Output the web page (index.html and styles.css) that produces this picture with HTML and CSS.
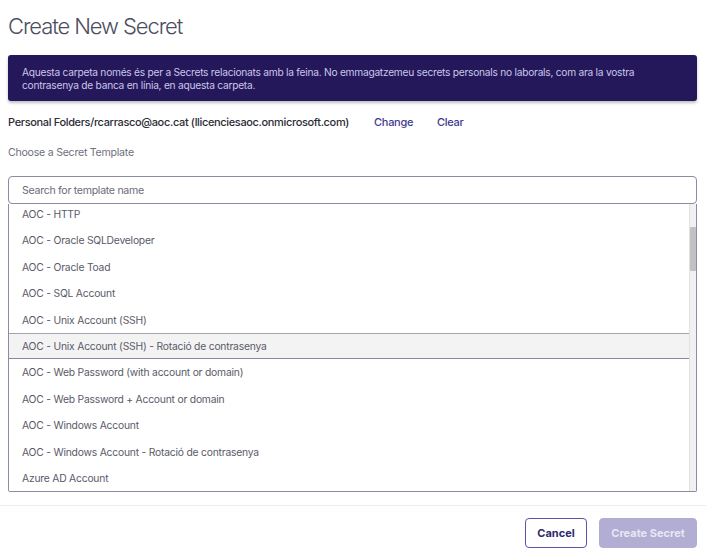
FILE: index.html
```html
<!DOCTYPE html>
<html lang="ca">
<head>
<meta charset="utf-8">
<title>Create New Secret</title>
<link rel="stylesheet" href="styles.css">
</head>
<body>
<div class="page">
  <h1 class="title">Create New Secret</h1>
  <div class="banner">Aquesta carpeta només és per a Secrets relacionats amb la feina. No emmagatzemeu secrets personals no laborals, com ara la vostra contrasenya de banca en línia, en aquesta carpeta.</div>
  <div class="folder-row">
    <span class="folder-path">Personal Folders/rcarrasco@aoc.cat (llicenciesaoc.onmicrosoft.com)</span>
    <a class="link link-change">Change</a>
    <a class="link">Clear</a>
  </div>
  <div class="label">Choose a Secret Template</div>
  <div class="picker">
    <input class="search" type="text" placeholder="Search for template name">
    <div class="list">
      <div class="items">
        <div class="items-inner">
          <div class="item">AOC - HTTP</div>
          <div class="item">AOC - Oracle SQLDeveloper</div>
          <div class="item">AOC - Oracle Toad</div>
          <div class="item">AOC - SQL Account</div>
          <div class="item">AOC - Unix Account (SSH)</div>
          <div class="item item-active">AOC - Unix Account (SSH) - Rotació de contrasenya</div>
          <div class="item">AOC - Web Password (with account or domain)</div>
          <div class="item">AOC - Web Password + Account or domain</div>
          <div class="item">AOC - Windows Account</div>
          <div class="item">AOC - Windows Account - Rotació de contrasenya</div>
          <div class="item">Azure AD Account</div>
        </div>
      </div>
      <div class="scrollbar"><div class="thumb"></div></div>
    </div>
  </div>
</div>
<div class="footer">
  <button class="btn btn-cancel">Cancel</button>
  <button class="btn btn-create" disabled>Create Secret</button>
</div>
</body>
</html>
```
FILE: styles.css
```css
* { box-sizing: border-box; }
html, body { margin: 0; padding: 0; background: #fff; }
body {
  font-family: Inter, "Noto Sans", "Liberation Sans", sans-serif;
  color: #2c2c3a;
  width: 706px;
  height: 559px;
  overflow: hidden;
}
.page { padding: 0 9px 0 8px; }
.title {
  margin: 0;
  padding-top: 12px;
  height: 55px;
  font-size: 22px;
  font-weight: 300;
  color: #4d4d5e;
  letter-spacing: -1.1px;
  line-height: 28px;
}
.banner {
  background: #24185a;
  color: #cbc6ea;
  font-size: 10.2px;
  letter-spacing: -0.25px;
  line-height: 12.5px;
  padding: 11px 14px 10px 14px;
  border-radius: 3px;
  box-shadow: 0 2px 3px rgba(0,0,0,0.25);
  height: 46px;
}
.folder-row {
  display: flex;
  align-items: center;
  margin-top: 13px;
  height: 16px;
  font-size: 11px;
}
.folder-path { color: #2c2c36; font-weight: 500; letter-spacing: -0.35px; }
.link { color: #3e3a8e; font-weight: 500; font-size: 11px; letter-spacing: -0.3px; }
.link-change { margin-left: 25px; margin-right: 24px; }
.label {
  margin-top: 16px;
  height: 14px;
  font-size: 10.6px;
  letter-spacing: -0.25px;
  color: #6f6f7e;
  line-height: 14px;
}
.picker { margin-top: 16px; }
.search {
  display: block;
  width: 100%;
  height: 28px;
  border: 1px solid #8b8ca3;
  border-radius: 4px;
  padding: 0 13px;
  font-family: inherit;
  font-size: 10.6px;
  letter-spacing: -0.3px;
  color: #333;
  outline: none;
}
.search::placeholder { color: #6b6b78; }
.list {
  display: flex;
  height: 288px;
  border: 1px solid #8b8ca3;
  border-top: none;
  border-radius: 0 0 2px 2px;
}
.items { flex: 1; overflow: hidden; }
.items-inner { margin-top: -3px; }
.item {
  height: 26.4px;
  line-height: 26.4px;
  padding-left: 13px;
  font-size: 10.3px;
  letter-spacing: -0.2px;
  color: #5a5a68;
  white-space: nowrap;
}
.item-active {
  background: #f3f3f4;
  border-top: 1px solid #a3a4ae;
  border-bottom: 1px solid #8788a6;
  line-height: 24.4px;
}
.scrollbar {
  width: 7px;
  background: #f1f1f1;
  border-left: 1px solid #e2e2e2;
  padding-top: 23px;
}
.thumb {
  height: 44px;
  background: #c1c1c1;
  border-radius: 1px;
}
.footer {
  margin-top: 13px;
  border-top: 1px solid #ececef;
  display: flex;
  justify-content: flex-end;
  gap: 12px;
  padding: 12px 9px 0 0;
}
.btn {
  height: 30px;
  border-radius: 4px;
  font-family: inherit;
  font-size: 11px;
  font-weight: 700;
}
.btn-cancel {
  width: 62px;
  background: #fff;
  border: 1px solid #5e53a8;
  color: #2e2a6e;
}
.btn-create {
  width: 98px;
  background: #b1add3;
  border: 1px solid #b1add3;
  color: #e8e6f4;
}
```
